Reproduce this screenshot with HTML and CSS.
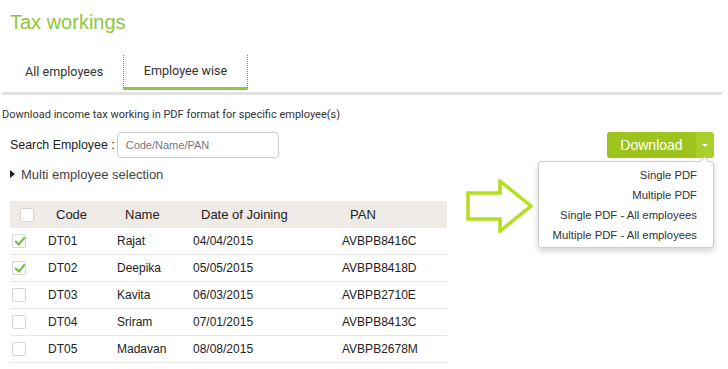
FILE: index.html
```html
<!DOCTYPE html>
<html lang="en">
<head>
    <meta charset="UTF-8">
    <title>Tax workings</title>
    <link rel="stylesheet" href="styles.css">
</head>
<body>

    <h1 class="title">Tax workings</h1>

    <!-- Tabs -->
    <div class="tabs">
        <div class="tab">All employees</div>
        <div class="tab active">Employee wise</div>
    </div>

    <p class="hint">Download income tax working in PDF format for specific employee(s)</p>

    <div class="toolbar">
        <label class="search-label">Search Employee :</label>
        <input type="text" class="search" placeholder="Code/Name/PAN">
        <div class="download">
            <button class="btn-main">Download</button>
            <button class="btn-caret"><span class="caret"></span></button>
            <ul class="menu">
                <li>Single PDF</li>
                <li>Multiple PDF</li>
                <li>Single PDF - All employees</li>
                <li>Multiple PDF - All employees</li>
            </ul>
            <svg class="arrow" width="68" height="54" viewBox="0 0 68 54">
                <path d="M2 14 H34 V2 L65 27 L34 52 V40 H2 Z" fill="none" stroke="#b3e01e" stroke-width="3.5" stroke-linejoin="miter"/>
            </svg>
        </div>
    </div>

    <div class="multi"><span class="tri"></span>Multi employee selection</div>

    <table class="grid">
        <thead>
            <tr>
                <th class="chk-col"><span class="box"></span></th>
                <th>Code</th>
                <th>Name</th>
                <th>Date of Joining</th>
                <th>PAN</th>
            </tr>
        </thead>
        <tbody>
            <tr>
                <td class="chk-col"><span class="box checked"></span></td>
                <td>DT01</td><td>Rajat</td><td>04/04/2015</td><td>AVBPB8416C</td>
            </tr>
            <tr>
                <td class="chk-col"><span class="box checked"></span></td>
                <td>DT02</td><td>Deepika</td><td>05/05/2015</td><td>AVBPB8418D</td>
            </tr>
            <tr>
                <td class="chk-col"><span class="box"></span></td>
                <td>DT03</td><td>Kavita</td><td>06/03/2015</td><td>AVBPB2710E</td>
            </tr>
            <tr>
                <td class="chk-col"><span class="box"></span></td>
                <td>DT04</td><td>Sriram</td><td>07/01/2015</td><td>AVBPB8413C</td>
            </tr>
            <tr>
                <td class="chk-col"><span class="box"></span></td>
                <td>DT05</td><td>Madavan</td><td>08/08/2015</td><td>AVBPB2678M</td>
            </tr>
        </tbody>
    </table>

</body>
</html>
```

FILE: styles.css
```css
body { margin: 0; padding: 0 6px 0 2px; font-family: "Liberation Sans", Arial, sans-serif; color: #222; background: #fff; }

.title { margin: 0; padding: 11px 0 0 8px; height: 44px; box-sizing: border-box; font-size: 20px; font-weight: normal; color: #8dc63f; }

.tabs { display: flex; height: 48px; border-bottom: 3px solid #e2e2e2; }
.tab { font-family: Roboto, sans-serif; font-size: 12.6px; color: #333; width: 121px; box-sizing: border-box; padding: 20px 0 0 23px; }
.tab.active { width: 125px; text-align: center; padding: 6px 0 0; line-height: 20px; height: 35px; margin-top: 11px; border-left: 1px dotted #888; border-right: 1px dotted #888; border-bottom: 3px solid #8dc63f; }

.hint { margin: 0; padding-top: 13px; height: 31px; box-sizing: border-box; font-family: Roboto, sans-serif; font-size: 11px; color: #333; }

.toolbar { display: flex; align-items: center; height: 26px; padding-left: 8px; margin-top: 6px; }
.search-label { font-size: 12.4px; color: #222; margin-right: 2px; }
.search { width: 162px; height: 26px; box-sizing: border-box; border: 1px solid #ccc; border-radius: 4px; padding: 0 8px; font-family: "Liberation Sans", Arial, sans-serif; font-size: 11px; }
.search::placeholder { color: #777; }

.download { margin-left: auto; display: flex; position: relative; margin-right: 8px; }
.btn-main { width: 89px; height: 26px; border: none; border-radius: 3px 0 0 3px; background: #9cc41c; color: #fff; font-family: "Liberation Sans", Arial, sans-serif; font-size: 14px; padding: 0; }
.btn-caret { width: 18px; height: 26px; border: none; border-radius: 0 3px 3px 0; background: #a9d02a; padding: 0; display: flex; align-items: center; justify-content: center; }
.caret { width: 0; height: 0; border-left: 3px solid transparent; border-right: 3px solid transparent; border-top: 3px solid #fff; }

.menu { position: absolute; top: 29px; right: 0; width: 176px; box-sizing: border-box; margin: 0; padding: 3px 16px 2px 0; list-style: none; background: #fff; border: 1px solid #ccc; border-radius: 3px; box-shadow: 0 3px 6px rgba(0,0,0,0.18); text-align: right; font-size: 11.3px; color: #333; }
.menu li { line-height: 20px; }
.menu::before { content: ""; position: absolute; top: -4px; right: 5px; width: 6px; height: 6px; background: #fff; border-left: 1px solid #ccc; border-top: 1px solid #ccc; transform: rotate(45deg); }

.arrow { position: absolute; left: -141px; top: 47px; }

.multi { display: flex; align-items: center; padding-left: 8px; margin-top: 8px; height: 16px; font-size: 13px; color: #444; }
.tri { width: 0; height: 0; border-top: 4px solid transparent; border-bottom: 4px solid transparent; border-left: 5px solid #222; margin-right: 6px; }

.grid { margin: 19px 0 0 8px; width: 437px; border-collapse: collapse; }
.grid th { background: #eeeae6; height: 27px; font-size: 13px; font-weight: normal; text-align: left; color: #222; padding: 0; }
.grid td { height: 26px; font-size: 12px; color: #222; padding: 0; border-bottom: 1px solid #e6e6e6; }
.grid th:nth-child(1) { width: 46px; }
.grid th:nth-child(2) { width: 69px; }
.grid th:nth-child(3) { width: 76px; }
.grid th:nth-child(4) { width: 149px; }
.grid td:nth-child(n+2) { position: relative; left: -8px; }

.grid th .box { margin-left: 10px; }
.grid td .box { margin-left: 2px; }
.box { display: block; width: 14px; height: 14px; box-sizing: border-box; border: 1px solid #d6d6d6; border-radius: 2px; background: #fff; position: relative; }
.box.checked::after { content: ""; position: absolute; left: 4px; top: 0px; width: 4px; height: 8px; border-right: 2px solid #6bbf3a; border-bottom: 2px solid #6bbf3a; transform: rotate(40deg); }
```
